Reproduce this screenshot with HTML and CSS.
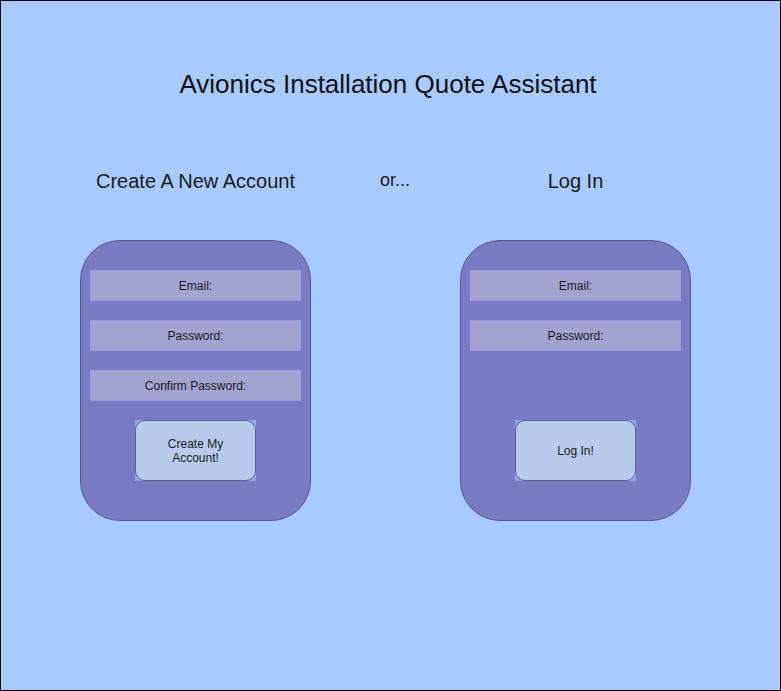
FILE: index.html
```html
<!DOCTYPE html>
<html>
<head>
<meta charset="utf-8">
<link rel="stylesheet" href="styles.css">
</head>
<body>
<div class="frame">
  <h1 class="title">Avionics Installation Quote Assistant</h1>
  <div class="layout">
    <div class="heading">Create A New Account</div>
    <div class="or">or...</div>
    <div class="heading">Log In</div>

    <div class="card">
      <div class="fields">
        <div class="field">Email:</div>
        <div class="field">Password:</div>
        <div class="field">Confirm Password:</div>
      </div>
      <div class="btn-wrap"><div class="btn">Create My<br>Account!</div></div>
    </div>
    <div></div>
    <div class="card">
      <div class="fields">
        <div class="field">Email:</div>
        <div class="field">Password:</div>
      </div>
      <div class="btn-wrap"><div class="btn">Log In!</div></div>
    </div>
  </div>
</div>
</body>
</html>
```

FILE: styles.css
```css
html, body {
  margin: 0;
  padding: 0;
}
body {
  font-family: "Liberation Sans", Arial, sans-serif;
  color: #111;
}
.frame {
  width: 781px;
  height: 691px;
  box-sizing: border-box;
  border: 1px solid #000;
  background: #a7caff;
  display: flex;
  flex-direction: column;
}
.title {
  margin: 68px 0 0 0;
  padding-right: 5px;
  font-size: 26px;
  font-weight: normal;
  line-height: 30px;
  text-align: center;
  color: #111;
}
.layout {
  margin-top: 70px;
  padding-left: 79px;
  display: grid;
  grid-template-columns: 231px 149px 231px;
  grid-template-rows: 24px;
  row-gap: 47px;
}
.heading {
  font-size: 20px;
  line-height: 24px;
  text-align: center;
  color: #1a1a1a;
}
.or {
  font-size: 18px;
  line-height: 22px;
  padding-left: 69px;
  color: #1a1a1a;
}
.card {
  height: 281px;
  box-sizing: border-box;
  border: 1px solid #56578c;
  border-radius: 40px;
  background: #7a7bc4;
  padding: 29px 9px 39px;
  display: flex;
  flex-direction: column;
}
.fields {
  display: flex;
  flex-direction: column;
  gap: 19px;
}
.field {
  height: 31px;
  box-sizing: border-box;
  border: 1px solid #9b9ce0;
  background: #a3a3d1;
  font-size: 12px;
  line-height: 29px;
  padding-top: 1px;
  text-align: center;
  color: #1a1a1a;
}
.btn-wrap {
  margin-top: auto;
  align-self: center;
  width: 121px;
  height: 61px;
  background: #8fa6ea;
}
.btn {
  width: 100%;
  height: 100%;
  box-sizing: border-box;
  border: 1px solid #5e608e;
  border-radius: 10px;
  background: #b8cbec;
  font-size: 12px;
  line-height: 14px;
  display: flex;
  align-items: center;
  justify-content: center;
  text-align: center;
  color: #1a1a1a;
}
```
